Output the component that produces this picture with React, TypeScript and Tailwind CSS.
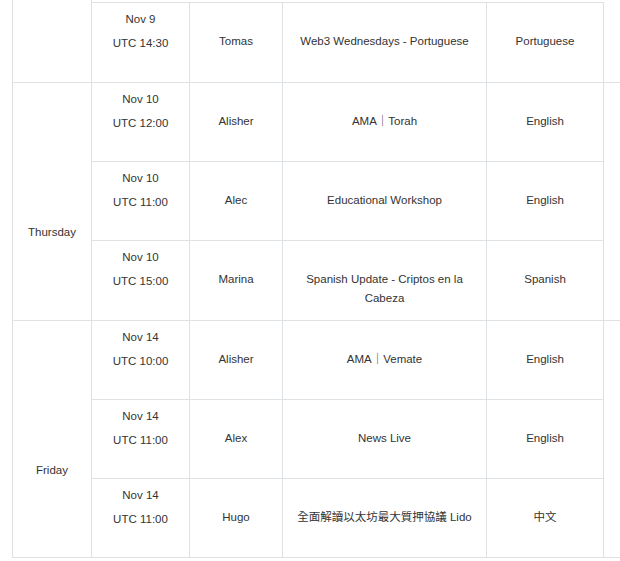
import React from "react";

type Ev = { date: string; time: string; host: string; title: string; lang: string; h: string };

const rows1: Ev[] = [
  { date: "Nov 9", time: "UTC 14:30", host: "Tomas", title: "Web3 Wednesdays - Portuguese", lang: "Portuguese", h: "h-[80px]" },
];
const thursday: Ev[] = [
  { date: "Nov 10", time: "UTC 12:00", host: "Alisher", title: "AMA｜Torah", lang: "English", h: "h-[79px]" },
  { date: "Nov 10", time: "UTC 11:00", host: "Alec", title: "Educational Workshop", lang: "English", h: "h-[79px]" },
  { date: "Nov 10", time: "UTC 15:00", host: "Marina", title: "Spanish Update - Criptos en la Cabeza", lang: "Spanish", h: "h-[79px]" },
];
const friday: Ev[] = [
  { date: "Nov 14", time: "UTC 10:00", host: "Alisher", title: "AMA｜Vemate", lang: "English", h: "h-[79px]" },
  { date: "Nov 14", time: "UTC 11:00", host: "Alex", title: "News Live", lang: "English", h: "h-[79px]" },
  { date: "Nov 14", time: "UTC 11:00", host: "Hugo", title: "全面解讀以太坊最大質押協議 Lido", lang: "中文", h: "h-[78px]" },
];

function Row({ e, first }: { e: Ev; first?: boolean }) {
  const b = "border-r border-b border-[#dfe2e5]" + (first ? " border-t" : "");
  return (
    <div className={`flex ${e.h}`}>
      <div className={`w-[98px] ${b} text-center pt-[4px] leading-[24px]`}>
        <div>{e.date}</div>
        <div>{e.time}</div>
      </div>
      <div className={`w-[93px] ${b} text-center pt-[29px] leading-[19px] px-2`}>{e.host}</div>
      <div className={`w-[204px] ${b} text-center pt-[29px] leading-[19px] px-[12px]`}>{e.title}</div>
      <div className={`w-[117px] ${b} text-center pt-[29px] leading-[19px] px-2`}>{e.lang}</div>
    </div>
  );
}

function Group({ day, events }: { day: string; events: Ev[] }) {
  return (
    <div className="flex border-b border-[#dfe2e5]">
      <div className="w-[80px] border-l border-r border-[#dfe2e5] text-center pt-[140px] leading-[19px]">{day}</div>
      <div className="flex flex-col [&>div:last-child>div]:border-b-0">
        {events.map((e, i) => (
          <Row key={i} e={e} />
        ))}
      </div>
    </div>
  );
}

export default function App() {
  return (
    <div
      className="bg-white w-[620px] h-[561px] overflow-hidden text-[11.5px] text-[#333333]"
      style={{ fontFamily: '"Liberation Sans", "Noto Sans CJK TC", Arial, sans-serif' }}
    >
      <div className="ml-[12px]">
        <div className="flex border-b border-[#dfe2e5]">
          <div className="w-[80px] border-l border-r border-[#dfe2e5]"></div>
          <div className="flex flex-col pt-[2px] [&>div:last-child>div]:border-b-0">
            {rows1.map((e, i) => (
              <Row key={i} e={e} first={i === 0} />
            ))}
          </div>
        </div>
        <Group day="Thursday" events={thursday} />
        <Group day="Friday" events={friday} />
      </div>
    </div>
  );
}
